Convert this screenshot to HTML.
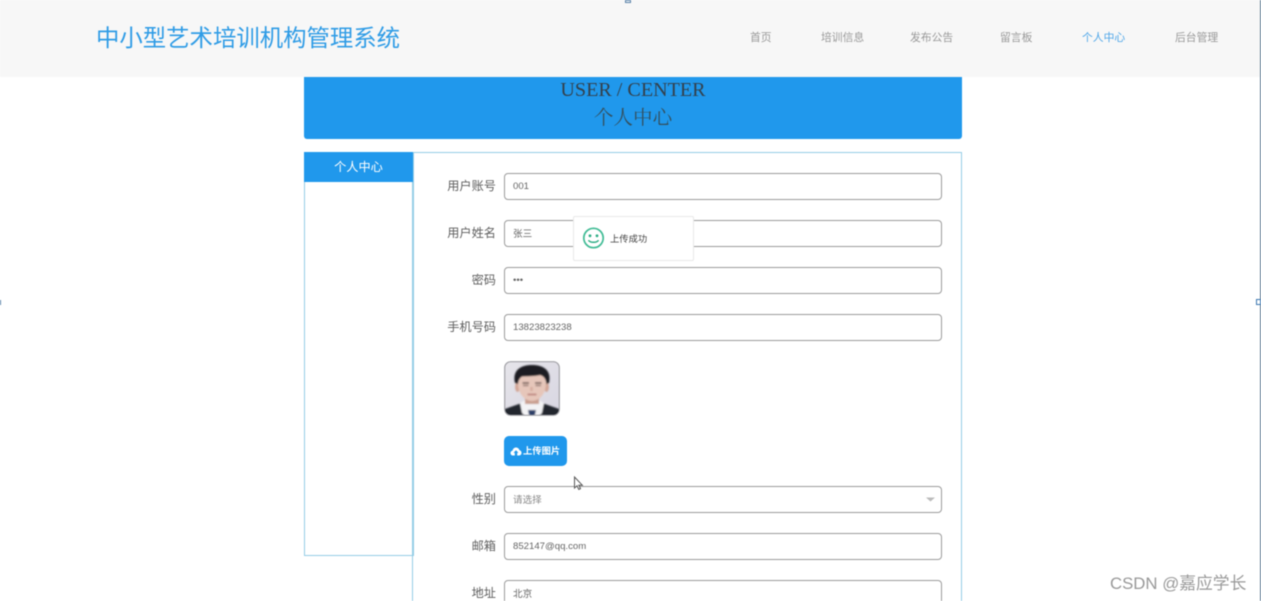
<!DOCTYPE html>
<html lang="zh">
<head>
<meta charset="utf-8">
<title>个人中心</title>
<style>
html,body{margin:0;padding:0;width:1261px;height:601px;overflow:hidden;background:#fff}
#w{position:relative;width:1261px;height:601px;overflow:hidden;background:#fff;filter:blur(.4px);font-family:"Liberation Sans","Noto Sans CJK SC",sans-serif}
#w div,#w span{position:absolute;white-space:nowrap;box-sizing:border-box}
.nav{top:30px;height:16px;line-height:16px;font-size:10.8px;color:#999}
.lb{right:765px;height:20px;line-height:20px;font-size:12.2px;color:#606060}
.in{left:504px;width:438px;height:27px;border:1.5px solid #9c9c9c;border-radius:4px;background:#fff}
.tx{left:513px;height:14px;line-height:14px;font-size:9.6px;color:#666}
</style>
</head>
<body>
<div id="w">
  <div style="left:0;top:0;width:1261px;height:77px;background:#f7f7f7"></div>
  <div style="left:96px;top:22px;height:32px;line-height:32px;font-size:23.4px;color:#2f9ce6">中小型艺术培训机构管理系统</div>
  <div class="nav" style="left:750px">首页</div>
  <div class="nav" style="left:821px">培训信息</div>
  <div class="nav" style="left:910px">发布公告</div>
  <div class="nav" style="left:1000px">留言板</div>
  <div class="nav" style="left:1082px;color:#4ea6e8">个人中心</div>
  <div class="nav" style="left:1175px">后台管理</div>

  <div style="left:304px;top:77px;width:658px;height:61.500px;background:#2098ec;border-radius:0 0 3px 3px"></div>
  <div style="left:304px;top:78px;width:658px;height:25px;text-align:center;font:20.100px/25px 'Liberation Serif',serif;color:#33414d">USER / CENTER</div>
  <div style="left:304px;top:106px;width:658px;height:26px;line-height:26px;text-align:center;font-family:'Liberation Serif','Noto Serif CJK SC',serif;font-size:19.600px;color:#33505f">个人中心</div>

  <div style="left:304px;top:152px;width:110px;height:404px;border:1.300px solid #95cde6"></div>
  <div style="left:412px;top:152px;width:550px;height:470px;border:1.500px solid #95cde6"></div>
  <div style="left:304px;top:152px;width:109px;height:30px;line-height:30px;text-align:center;background:#2098ec;color:#fff;font-size:12.200px">个人中心</div>

  <div class="lb" style="top:176px">用户账号</div>
  <div class="in" style="top:173px"></div>
  <div class="tx" style="top:180px">001</div>

  <div class="lb" style="top:223px">用户姓名</div>
  <div class="in" style="top:220px"></div>
  <div class="tx" style="top:228px">张三</div>

  <div class="lb" style="top:270px">密码</div>
  <div class="in" style="top:267px"></div>
  <div class="tx" style="top:274px">•••</div>

  <div class="lb" style="top:317px">手机号码</div>
  <div class="in" style="top:314px"></div>
  <div class="tx" style="top:321px">13823823238</div>

  <svg style="position:absolute;left:504px;top:361px" width="56" height="55" viewBox="0 0 56 55">
    <defs>
      <clipPath id="c"><rect x="0.500" y="0.500" width="55" height="54" rx="6"/></clipPath>
      <filter id="b" x="-10%" y="-10%" width="120%" height="120%"><feGaussianBlur stdDeviation=".8"/></filter>
      <linearGradient id="g" x1="0" x2="1" y1="0" y2="1"><stop offset="0" stop-color="#e6e5ea"/><stop offset="1" stop-color="#d8d6e2"/></linearGradient>
    </defs>
    <g clip-path="url(#c)">
      <rect width="56" height="55" fill="url(#g)"/>
      <g filter="url(#b)">
        <path d="M-2 57V49L15 43L21 40H35L41 43L58 49V57Z" fill="#24262e"/>
        <path d="M16 42L23 38H33L40 42L38 52L33 57H23L18 52Z" fill="#f3f3f5"/>
        <path d="M24 49H32L30.500 56H25.500Z" fill="#2c3e66"/>
        <rect x="21" y="32" width="14" height="11" fill="#c99f90"/>
        <ellipse cx="13.500" cy="26" rx="2.400" ry="5" fill="#d2a595"/>
        <ellipse cx="42.500" cy="26" rx="2.400" ry="5" fill="#d2a595"/>
        <ellipse cx="28" cy="22.500" rx="14" ry="17.500" fill="#e6c6ba"/>
        <path d="M11 22C8 9 17 4 28 4C39 4 48 9 45 22L42.500 23C42 18 40 15 36 14C30 15.500 22 15 18 15.500C15.500 17 14 20 14 23Z" fill="#1b1c21"/>
        <path d="M18.500 22H25M31 22H37.500" stroke="#6a5450" stroke-width="1.400"/>
        <path d="M19 24.500H24.500M31.500 24.500H37" stroke="#8b716b" stroke-width="1.200"/>
        <path d="M27.500 26V30" stroke="#d6ac9e" stroke-width="2.500"/>
        <path d="M23.500 33.500H32.500" stroke="#b97c77" stroke-width="1.600"/>
      </g>
    </g>
    <rect x="0.700" y="0.700" width="54.600" height="53.600" rx="6" fill="none" stroke="#a2a2a7" stroke-width="1.200"/>
  </svg>

  <div style="left:504px;top:436px;width:63px;height:30px;background:#2098ec;border-radius:5px"></div>
  <svg style="position:absolute;left:510px;top:446px" width="12" height="10" viewBox="0 0 12 10">
    <path d="M3 9.500C1.300 9.500 .5 8.200 .5 7C.5 5.700 1.400 4.800 2.500 4.600C3 2.600 4.400 1.500 6 1.500C7.700 1.500 9 2.600 9.500 4.300C10.700 4.500 11.500 5.600 11.500 6.900C11.500 8.300 10.500 9.500 9 9.500H7.200V6.800H8.500L6 4.200L3.500 6.800H4.800V9.500Z" fill="#fff"/>
  </svg>
  <div style="left:523px;top:444px;height:14px;line-height:14px;font-size:9.300px;color:#fff;font-weight:bold">上传图片</div>

  <div class="lb" style="top:489px">性别</div>
  <div class="in" style="top:486px"></div>
  <div class="tx" style="top:494px;color:#888">请选择</div>
  <svg style="position:absolute;left:926px;top:497px" width="9" height="5" viewBox="0 0 9 5"><path d="M0 .5H9L4.500 4.500Z" fill="#bbb"/></svg>

  <div class="lb" style="top:536px">邮箱</div>
  <div class="in" style="top:533px"></div>
  <div class="tx" style="top:540px">852147@qq.com</div>

  <div class="lb" style="top:583px">地址</div>
  <div class="in" style="top:580px"></div>
  <div class="tx" style="top:588px">北京</div>

  <div style="left:573px;top:216px;width:121px;height:45px;background:#fff;border:1px solid #e8e8e8;border-radius:2px"></div>
  <svg style="position:absolute;left:582px;top:227px" width="23" height="22" viewBox="0 0 23 22">
    <circle cx="11.500" cy="11" r="9.700" fill="none" stroke="#3fbb94" stroke-width="1.700"/>
    <circle cx="8" cy="8.800" r="1.400" fill="#2fae86"/>
    <circle cx="15" cy="8.800" r="1.400" fill="#2fae86"/>
    <path d="M6.500 13.200C8 16 15 16 16.500 13.200" fill="none" stroke="#2fae86" stroke-width="1.500"/>
  </svg>
  <div style="left:610px;top:232px;height:14px;line-height:14px;font-size:9.300px;color:#444">上传成功</div>

  <svg style="position:absolute;left:573px;top:476px" width="12" height="16" viewBox="0 0 12 16">
    <path d="M1.500 1V12L4 9.800L5.800 13.500L7.500 12.700L5.800 9.200H9.300Z" fill="#fff" stroke="#555" stroke-width="1"/>
  </svg>

  <div style="left:1110px;top:573px;height:22px;line-height:22px;font-size:16.800px;color:#999">CSDN @嘉应学长</div>

  <div style="left:1260px;top:0;width:1px;height:601px;background:#56738c"></div>
  <div style="left:625px;top:0;width:6px;height:3px;border:1px solid #5a82a8;background:#fff"></div>
  <div style="left:0;top:300px;width:1px;height:5px;background:#5a82a8"></div>
  <div style="left:1256px;top:299px;width:5px;height:6px;border:1px solid #3d77b0;background:#fff"></div>
</div>
</body>
</html>
